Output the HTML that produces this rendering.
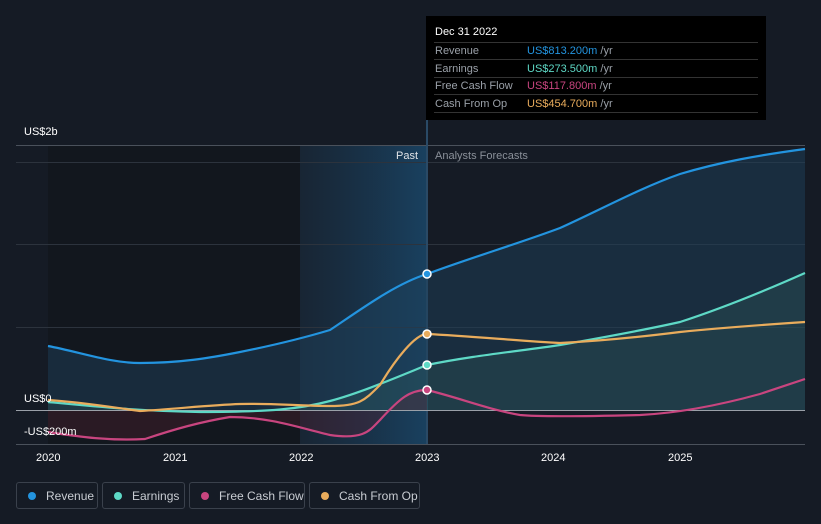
<!DOCTYPE html><html><head><style>
body{margin:0;width:821px;height:524px;background:#151b25;font-family:"Liberation Sans",sans-serif;overflow:hidden;position:relative}
.t{position:absolute;color:#fff;font-size:11px}
.lg{position:absolute;top:482px;height:27px;border:1px solid #3a414c;border-radius:3px;color:#c8ccd2;font-size:12px;line-height:27px;box-sizing:border-box}
.lg i{display:inline-block;width:8px;height:8px;border-radius:50%;margin:0 10px 0 11px;vertical-align:0}
</style></head><body>
<svg width="821" height="524" style="position:absolute;left:0;top:0">
<defs><linearGradient id="p" x1="0" x2="1"><stop offset="0" stop-color="#1a2c3e" stop-opacity=".6"/><stop offset="1" stop-color="#1a4a6e" stop-opacity=".8"/></linearGradient></defs>
<rect x="48" y="145" width="252" height="299" fill="#12171e"/>
<rect x="300" y="145" width="127" height="299" fill="url(#p)"/>
<g stroke="#2c333d" stroke-width="1"><line x1="16" x2="805" y1="145.5" y2="145.5" stroke="#4a515b"/><line x1="16" x2="805" y1="162.5" y2="162.5"/><line x1="16" x2="805" y1="244.5" y2="244.5"/><line x1="16" x2="805" y1="327.5" y2="327.5"/><line x1="16" x2="805" y1="444.5" y2="444.5" stroke="#4a515b"/></g>
<line x1="427" x2="427" y1="120" y2="444" stroke="#2a4a66" stroke-width="2"/>
<path d="M48,346 C80,352 110,363 140,363 C180,363 210,358 240,352 C270,346 300,339 330,330 C360,310 395,284 427,274 C470,258 520,243 560,228 C600,210 640,188 680,174 C720,162 760,155 805,149 L805,410 L48,410Z" fill="#1e3f5a" opacity=".5"/>
<path d="M48,402 C100,407 140,411 200,412 C270,412 300,409 330,401 C360,393 395,378 427,365 C470,356 520,351 560,345 C600,338 640,331 680,322 C720,309 760,293 805,273 L805,410 L48,410Z" fill="#2f5a5a" opacity=".35"/>
<path d="M48,432 C80,437 110,441 145,439 C175,429 200,422 230,417 C270,417 300,428 330,435 C365,440 370,430 380,420 C400,398 410,390 427,390 L427,410 L48,410Z" fill="#5a2030" opacity=".35"/>
<line x1="16" x2="805" y1="410.5" y2="410.5" stroke="#9aa0a8" stroke-width="1"/>
<g fill="none" stroke-width="2.2">
<path d="M48,346 C80,352 110,363 140,363 C180,363 210,358 240,352 C270,346 300,339 330,330 C360,310 395,284 427,274 C470,258 520,243 560,228 C600,210 640,188 680,174 C720,162 760,155 805,149" stroke="#2394df"/>
<path d="M48,402 C100,407 140,411 200,412 C270,412 300,409 330,401 C360,393 395,378 427,365 C470,356 520,351 560,345 C600,338 640,331 680,322 C720,309 760,293 805,273" stroke="#5ed9c6"/>
<path d="M48,432 C80,437 110,441 145,439 C175,429 200,422 230,417 C270,417 300,428 330,435 C365,440 370,430 380,420 C400,398 410,390 427,390 C460,398 490,410 520,415 C540,417 600,416 640,415 C680,413 720,405 760,394 L805,379" stroke="#c8457f"/>
<path d="M48,400 C80,402 110,407 140,411 C175,409 210,405 240,404 C270,403 300,406 330,406 C360,406 365,400 380,385 C395,360 415,334 427,334 C470,336 520,341 560,343 C600,341 640,337 680,332 C720,328 760,325 805,322" stroke="#e9ac5c"/>
</g>
<g stroke="#fff" stroke-width="1.5"><circle cx="427" cy="274" r="4" fill="#2394df"/><circle cx="427" cy="365" r="4" fill="#5ed9c6"/><circle cx="427" cy="390" r="4" fill="#c8457f"/><circle cx="427" cy="334" r="4" fill="#e9ac5c"/></g>
</svg>
<div class="t" style="left:24px;top:126px">US$2b</div>
<div class="t" style="left:24px;top:393px">US$0</div>
<div class="t" style="left:24px;top:426px">-US$200m</div>
<div class="t" style="left:396px;top:150px;color:#e0e3e7">Past</div>
<div class="t" style="left:435px;top:150px;color:#8a9099">Analysts Forecasts</div>
<div class="t" style="left:36px;top:452px">2020</div><div class="t" style="left:163px;top:452px">2021</div><div class="t" style="left:289px;top:452px">2022</div><div class="t" style="left:415px;top:452px">2023</div><div class="t" style="left:541px;top:452px">2024</div><div class="t" style="left:668px;top:452px">2025</div>
<div style="position:absolute;left:426px;top:16px;width:340px;height:104px;background:#000;font-size:11px;color:#9aa0a8">
<div style="position:absolute;left:9px;top:10px;color:#fff">Dec 31 2022</div>
<div style="position:absolute;left:8px;right:8px;top:26px;border-top:1px solid #333"></div>
<div style="position:absolute;left:9px;top:27px;line-height:17.5px">Revenue<br>Earnings<br>Free Cash Flow<br>Cash From Op</div>
<div style="position:absolute;left:101px;top:27px;line-height:17.5px"><span style="color:#2394df">US$813.200m</span> /yr<br><span style="color:#5ed9c6">US$273.500m</span> /yr<br><span style="color:#c8457f">US$117.800m</span> /yr<br><span style="color:#e9ac5c">US$454.700m</span> /yr</div>
<div style="position:absolute;left:8px;right:8px;top:43px;border-top:1px solid #333"></div>
<div style="position:absolute;left:8px;right:8px;top:61px;border-top:1px solid #333"></div>
<div style="position:absolute;left:8px;right:8px;top:78px;border-top:1px solid #333"></div>
<div style="position:absolute;left:8px;right:8px;top:96px;border-top:1px solid #333"></div>
</div>
<div class="lg" style="left:16px;width:82px"><i style="background:#2394df"></i>Revenue</div>
<div class="lg" style="left:102px;width:83px"><i style="background:#5ed9c6"></i>Earnings</div>
<div class="lg" style="left:189px;width:116px"><i style="background:#c8457f"></i>Free Cash Flow</div>
<div class="lg" style="left:309px;width:111px"><i style="background:#e9ac5c"></i>Cash From Op</div>
</body></html>
